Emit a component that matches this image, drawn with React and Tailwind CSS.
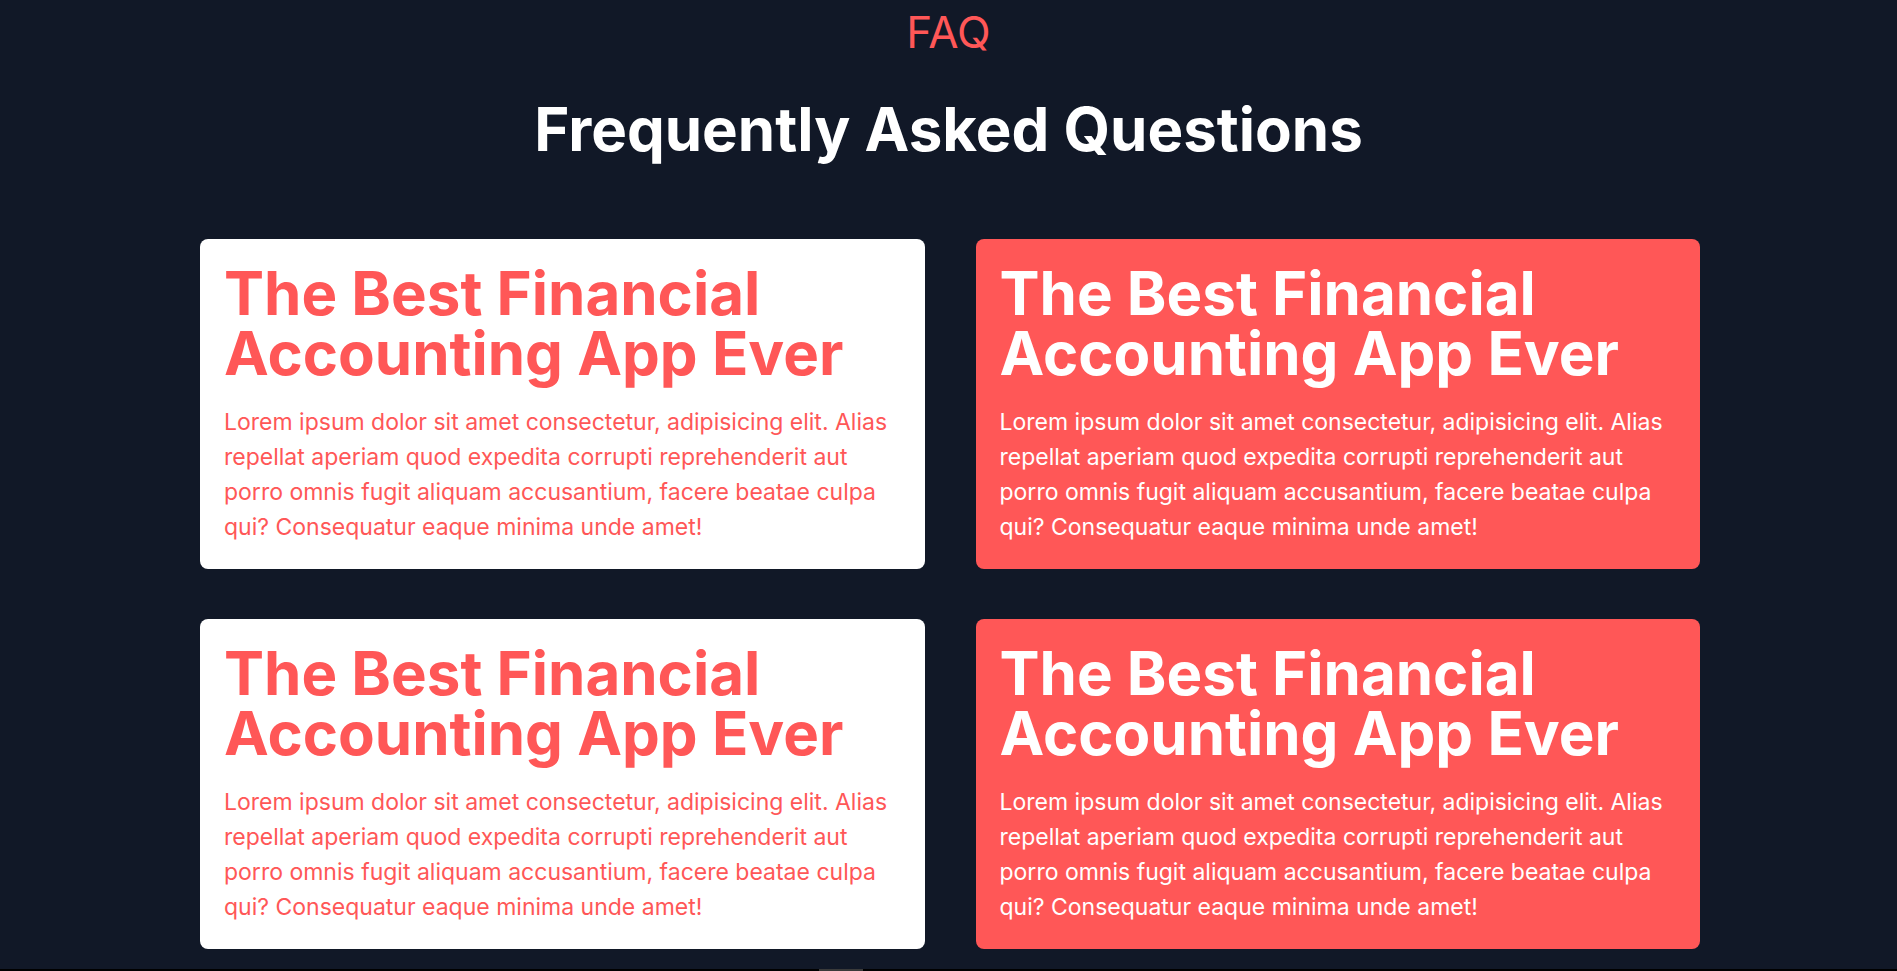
import React from "react";

const body =
  "Lorem ipsum dolor sit amet consectetur, adipisicing elit. Alias repellat aperiam quod expedita corrupti reprehenderit aut porro omnis fugit aliquam accusantium, facere beatae culpa qui? Consequatur eaque minima unde amet!";

function Card({ red }) {
  return (
    <div
      className={
        "rounded-lg p-6 h-[330px] " +
        (red ? "bg-[#ff5757] text-white" : "bg-white text-[#ff5757]")
      }
    >
      <h3 className="text-6xl leading-none font-bold">
        The Best Financial
        <br />
        Accounting App Ever
      </h3>
      <p className="mt-[22px] text-[23px] leading-[35px]">{body}</p>
    </div>
  );
}

export default function App() {
  return (
    <div
      className="w-full min-h-[971px] bg-[#111827] flex flex-col"
      style={{ fontFamily: "Inter, 'Noto Sans', sans-serif" }}
    >
      <div className="h-[969px] flex flex-col items-center pt-[10px]">
        <p className="text-[44px] leading-none text-[#ff5757]">FAQ</p>
        <h2 className="mt-[45px] text-6xl leading-none font-bold text-white">
          Frequently Asked Questions
        </h2>
        <div className="mt-[80px] w-[1500px] grid grid-cols-2 gap-x-[51px] gap-y-[50px] ml-[3px]">
          <Card />
          <Card red />
          <Card />
          <Card red />
        </div>
      </div>
      <div className="h-[2px] bg-black flex">
        <div className="ml-[819px] w-[44px] h-full bg-[#3a3a3a]" />
      </div>
    </div>
  );
}
